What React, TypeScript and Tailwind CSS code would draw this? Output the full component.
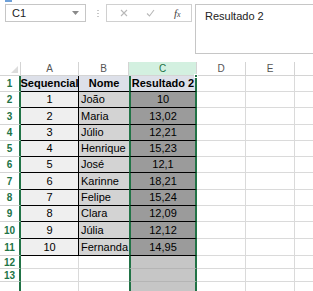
import React from "react";

type Row = { seq: string; nome: string; res: string };

const rows: Row[] = [
  { seq: "1", nome: "João", res: "10" },
  { seq: "2", nome: "Maria", res: "13,02" },
  { seq: "3", nome: "Júlio", res: "12,21" },
  { seq: "4", nome: "Henrique", res: "15,23" },
  { seq: "5", nome: "José", res: "12,1" },
  { seq: "6", nome: "Karinne", res: "18,21" },
  { seq: "7", nome: "Felipe", res: "15,24" },
  { seq: "8", nome: "Clara", res: "12,09" },
  { seq: "9", nome: "Júlia", res: "12,12" },
  { seq: "10", nome: "Fernanda", res: "14,95" },
];

const heights = [16, 16, 17, 16, 16, 16, 17, 16, 16, 17, 17];

function RowNum({ n, h }: { n?: number; h: number }) {
  return (
    <div
      className="flex w-[21px] shrink-0 items-center justify-center border-r-2 border-b border-r-[#217346] border-b-[#d4d4d4] bg-white text-[10px] font-bold text-[#217346]"
      style={{ height: h }}
    >
      {n}
    </div>
  );
}

function EmptyCells() {
  return (
    <>
      <div className="h-full w-[49px] shrink-0 border-r border-b border-[#dadada]" />
      <div className="h-full w-[49px] shrink-0 border-r border-b border-[#dadada]" />
      <div className="h-full w-[20px] shrink-0 border-b border-[#dadada]" />
    </>
  );
}

export default function App() {
  return (
    <div className="h-[291px] w-[313px] overflow-hidden bg-white font-['Liberation_Sans',Arial,sans-serif] text-[11px] text-black">
      {/* formula bar */}
      <div className="relative flex h-[62px] items-start pt-[4px]">
        <div className="absolute left-[5px] top-0 h-[2px] w-[7px] bg-[#6ea0d8]" />
        <div className="ml-[5px] flex h-[18px] w-[81px] items-center justify-between border border-[#c6c6c6] pl-[6px] pr-[6px]">
          <span className="text-[11px] text-[#222]">C1</span>
          <svg width="7" height="4" viewBox="0 0 7 4">
            <path d="M0 0 L7 0 L3.5 4 Z" fill="#8a8a8a" />
          </svg>
        </div>
        <div className="ml-[10px] flex h-[18px] w-[4px] flex-col items-center justify-center gap-[2px]">
          <div className="h-[1px] w-[2px] bg-[#c8c8c8]" />
          <div className="h-[1px] w-[2px] bg-[#c8c8c8]" />
          <div className="h-[1px] w-[2px] bg-[#c8c8c8]" />
        </div>
        <div className="ml-[6px] flex h-[18px] w-[86px] items-center border border-[#d0d0d0]">
          <svg className="ml-[13px]" width="8" height="8" viewBox="0 0 8 8">
            <path d="M1 1 L7 7 M7 1 L1 7" stroke="#b8b8b8" strokeWidth="1.1" />
          </svg>
          <svg className="ml-[18px]" width="9" height="8" viewBox="0 0 9 8">
            <path d="M1 4.5 L3.5 7 L8 1" stroke="#b8b8b8" strokeWidth="1.1" fill="none" />
          </svg>
          <span className="ml-[19px] font-['Liberation_Serif',serif] text-[11px] italic text-[#444]">
            f<span className="text-[8px]">x</span>
          </span>
        </div>
        <div className="ml-[3px] h-[50px] flex-1 border-t border-b border-l border-[#c6c6c6] pl-[9px] pt-[3px] text-[11px] text-[#222]">
          Resultado 2
        </div>
      </div>

      {/* grid */}
      <div className="relative">
        {/* column headers */}
        <div className="flex h-[14px] text-[10px] text-[#555]">
          <div className="relative w-[21px] shrink-0 border-r border-b border-[#d4d4d4]">
            <svg className="absolute right-[2px] bottom-[2px]" width="7" height="7" viewBox="0 0 7 7">
              <path d="M7 0 L7 7 L0 7 Z" fill="#dcdcdc" />
            </svg>
          </div>
          <div className="flex w-[58px] shrink-0 items-center justify-center border-r border-b border-[#d4d4d4]">A</div>
          <div className="flex w-[50px] shrink-0 items-center justify-center border-r border-b border-[#d4d4d4]">B</div>
          <div className="flex w-[68px] shrink-0 items-center justify-center border-r border-b border-[#d4d4d4] bg-[#d3f0e0] text-[#217346]">C</div>
          <div className="flex w-[49px] shrink-0 items-center justify-center border-r border-b border-[#d4d4d4]">D</div>
          <div className="flex w-[49px] shrink-0 items-center justify-center border-r border-b border-[#d4d4d4]">E</div>
          <div className="w-[20px] shrink-0 border-b border-[#d4d4d4]" />
        </div>

        {/* row 1 */}
        <div className="flex font-bold" style={{ height: heights[0] }}>
          <RowNum n={1} h={heights[0]} />
          <div className="flex w-[58px] shrink-0 items-center justify-center border-r border-b border-black bg-[#dde0e9]">Sequencial</div>
          <div className="flex w-[50px] shrink-0 items-center justify-center border-b border-black bg-[#dde0e9]">Nome</div>
          <div className="flex w-[68px] shrink-0 items-center justify-center border-x-2 border-b border-x-[#217346] border-b-black bg-[#dde0e9]">Resultado 2</div>
          <EmptyCells />
        </div>

        {rows.map((r, i) => (
          <div key={r.seq} className="flex" style={{ height: heights[i + 1] }}>
            <RowNum n={i + 2} h={heights[i + 1]} />
            <div className="flex w-[58px] shrink-0 items-center justify-center border-r border-b border-black bg-[#efefef]">{r.seq}</div>
            <div className="flex w-[50px] shrink-0 items-center border-b border-black bg-[#d3d3d3] pl-[2px]">{r.nome}</div>
            <div className="flex w-[68px] shrink-0 items-center justify-center border-x-2 border-b border-x-[#217346] border-b-black bg-[#9b9b9b]">{r.res}</div>
            <EmptyCells />
          </div>
        ))}

        {[12, 13, 0].map((n) => (
          <div key={n} className="flex h-[13px]">
            <RowNum n={n || undefined} h={13} />
            <div className="w-[58px] shrink-0 border-r border-b border-[#dadada]" />
            <div className="w-[50px] shrink-0 border-b border-[#dadada]" />
            <div className="w-[68px] shrink-0 border-x-2 border-b border-x-[#217346] border-b-[#b5b5b5] bg-[#c6c6c6]" />
            <EmptyCells />
          </div>
        ))}

        {/* fill handle */}
        <div className="absolute left-[194px] top-[12px] h-[4px] w-[4px] border border-white bg-[#217346]" />
      </div>
    </div>
  );
}
